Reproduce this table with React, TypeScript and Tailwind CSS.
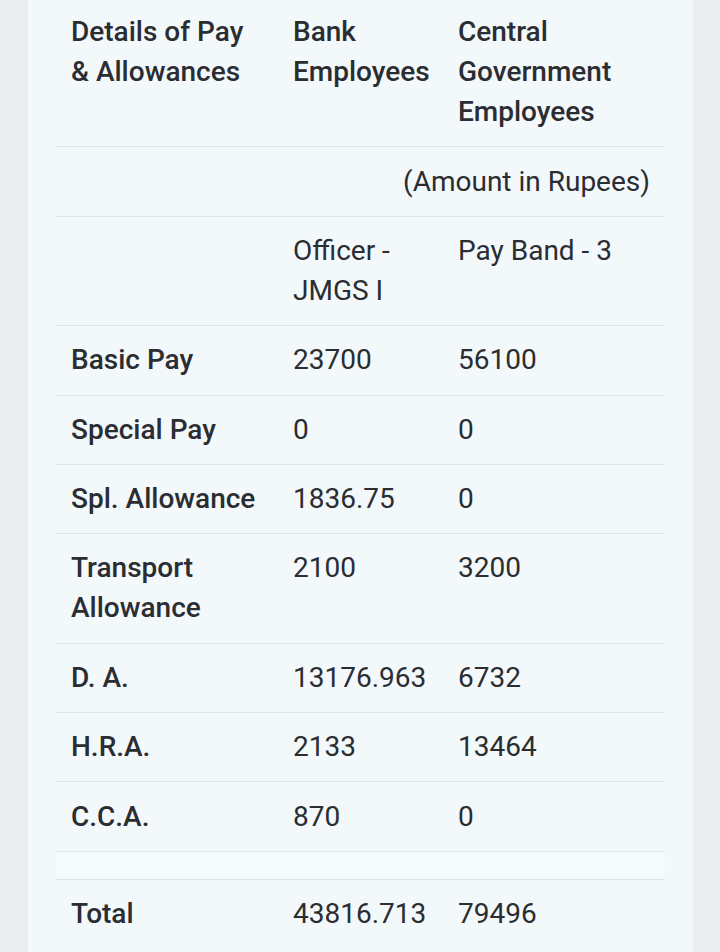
import React from "react";

// --- DATA ---
const ROWS = [
  { label: "Basic Pay", bank: "23700", central: "56100" },
  { label: "Special Pay", bank: "0", central: "0" },
  { label: "Spl. Allowance", bank: "1836.75", central: "0" },
  { label: "Transport Allowance", bank: "2100", central: "3200" },
  { label: "D. A.", bank: "13176.963", central: "6732" },
  { label: "H.R.A.", bank: "2133", central: "13464" },
  { label: "C.C.A.", bank: "870", central: "0" },
];

const cell = "px-[15px] py-[14.2px] align-top";

export default function App() {
  return (
    <div
      className="w-[720px] h-[952px] overflow-hidden bg-[#e9edf0] text-[#2a2d31] text-[28px] leading-[40px]"
      style={{ fontFamily: "Roboto, 'Liberation Sans', sans-serif" }}
    >
      <div className="flow-root ml-[28px] w-[665px] h-full bg-[#f3f8fb] px-[28px]">
        <table className="w-[609px] table-fixed border-collapse -mt-[2px]">
          <colgroup>
            <col className="w-[222px]" />
            <col className="w-[165px]" />
            <col className="w-[222px]" />
          </colgroup>
          <tbody>
            {/* Header */}
            <tr className="border-b border-[#dde3e8]">
              <td className={`${cell} font-medium`}>Details of Pay &amp; Allowances</td>
              <td className={`${cell} font-medium`}>Bank Employees</td>
              <td className={`${cell} font-medium`}>Central Government Employees</td>
            </tr>

            <tr className="border-b border-[#dde3e8]">
              <td colSpan={3} className={`${cell} text-right`}>
                (Amount in Rupees)
              </td>
            </tr>

            <tr className="border-b border-[#dde3e8]">
              <td className={cell}></td>
              <td className={cell}>Officer - JMGS I</td>
              <td className={cell}>Pay Band - 3</td>
            </tr>

            {ROWS.map((row) => (
              <tr key={row.label} className="border-b border-[#dde3e8]">
                <td className={`${cell} font-medium`}>{row.label}</td>
                <td className={cell}>{row.bank}</td>
                <td className={cell}>{row.central}</td>
              </tr>
            ))}

            {/* spacer row */}
            <tr className="border-b border-[#dde3e8] bg-[#f5fafd]">
              <td colSpan={3} className="h-[28px]"></td>
            </tr>

            <tr>
              <td className={`${cell} font-medium`}>Total</td>
              <td className={cell}>43816.713</td>
              <td className={cell}>79496</td>
            </tr>
          </tbody>
        </table>
      </div>
    </div>
  );
}
